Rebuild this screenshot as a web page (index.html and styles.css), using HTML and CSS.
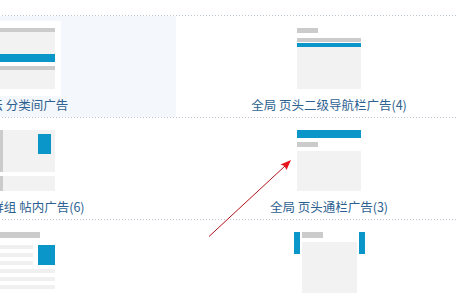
FILE: index.html
```html
<!DOCTYPE html>
<html lang="zh-CN">
<head>
<meta charset="utf-8">
<title>广告位</title>
<link rel="stylesheet" href="styles.css">
</head>
<body>
<div class="board">
  <div class="row">
    <div class="cell active">
      <div class="frame">
        <div class="thumb t-catlist">
          <div class="bar-gray h4"></div>
          <div class="fill h22"></div>
          <div class="bar-blue h8"></div>
          <div class="gap4"></div>
          <div class="bar-gray h4"></div>
          <div class="fill grow"></div>
        </div>
      </div>
      <div class="label">论坛 分类间广告</div>
    </div>
    <div class="cell">
      <div class="frame">
        <div class="thumb t-subnav">
          <div class="bar-gray small h5"></div>
          <div class="gap5"></div>
          <div class="bar-gray h4"></div>
          <div class="gap1"></div>
          <div class="bar-blue h4"></div>
          <div class="fill grow"></div>
        </div>
      </div>
      <div class="label">全局 页头二级导航栏广告(4)</div>
    </div>
  </div>

  <div class="row">
    <div class="cell">
      <div class="frame">
        <div class="thumb t-post">
          <div class="post post-main">
            <div class="side"></div>
            <div class="content"><div class="ad-box"></div></div>
          </div>
          <div class="post post-next">
            <div class="side"></div>
            <div class="content"></div>
          </div>
        </div>
      </div>
      <div class="label">论坛/群组 帖内广告(6)</div>
    </div>
    <div class="cell">
      <div class="frame">
        <div class="thumb t-header">
          <div class="bar-blue h8"></div>
          <div class="gap4"></div>
          <div class="bar-gray small h5"></div>
          <div class="gap4"></div>
          <div class="fill grow"></div>
        </div>
      </div>
      <div class="label">全局 页头通栏广告(3)</div>
    </div>
  </div>

  <div class="row">
    <div class="cell">
      <div class="frame">
        <div class="thumb t-list">
          <div class="bar-gray title"></div>
          <div class="list-grid">
            <div class="line"></div>
            <div class="list-ad"></div>
            <div class="line"></div>
            <div class="line"></div>
            <div class="line wide"></div>
            <div class="line wide"></div>
            <div class="line wide"></div>
          </div>
        </div>
      </div>
      <div class="label">论坛/群组 帖子列表帖位广告(2)</div>
    </div>
    <div class="cell">
      <div class="frame">
        <div class="thumb t-couplet">
          <div class="couplet-bar"></div>
          <div class="couplet-main">
            <div class="bar-gray small h6"></div>
            <div class="gap4"></div>
            <div class="fill grow"></div>
          </div>
          <div class="couplet-bar"></div>
        </div>
      </div>
      <div class="label">全局 对联广告(1)</div>
    </div>
  </div>
</div>

<svg class="arrow" width="458" height="298" viewBox="0 0 458 298" xmlns="http://www.w3.org/2000/svg">
  <line x1="209" y1="236.5" x2="285" y2="166" stroke="#b3121c" stroke-width="1"/>
  <polygon points="291,160 280.5,164.5 284.5,166 286.5,170" fill="#e8141c"/>
</svg>
</body>
</html>
```

FILE: styles.css
```css
html, body {
  margin: 0;
  padding: 0;
  background: #fff;
}

body {
  width: 458px;
  height: 298px;
  overflow: hidden;
  position: relative;
  font-family: "Noto Sans CJK SC", "Microsoft YaHei", "DejaVu Sans", sans-serif;
}

.board {
  margin-left: -130px;
  padding-top: 15px;
  width: 612px;
}

.row {
  display: grid;
  grid-template-columns: 306px 306px;
  height: 101px;
  padding-top: 1px;
  background-image: linear-gradient(to right, #bec8d5 1px, transparent 1px);
  background-size: 3px 1px;
  background-repeat: repeat-x;
  background-position: 0 0;
}

.cell {
  display: flex;
  flex-direction: column;
  align-items: center;
  padding-top: 5px;
}

.cell.active {
  background: #f4f7fb;
}

.frame {
  padding: 7px 6px;
}

.cell.active .frame {
  background: #fff;
}

.label {
  font-size: 12.5px;
  line-height: 16px;
  padding-top: 1px;
  color: #2e5f91;
  white-space: nowrap;
}

.thumb {
  width: 64px;
  height: 61px;
  display: flex;
  flex-direction: column;
}

.bar-gray { background: #cbcbcb; }
.bar-blue { background: #0b96c9; }
.fill { background: #f2f2f2; }
.grow { flex: 1; }
.small { width: 21px; }

.h4 { height: 4px; }
.h5 { height: 5px; }
.h6 { height: 6px; }
.h8 { height: 8px; }
.h22 { height: 22px; }
.gap1 { height: 1px; }
.gap4 { height: 4px; }
.gap5 { height: 5px; }

/* 帖内广告 */
.post {
  display: flex;
}
.post-main { height: 42px; }
.post-next { height: 15px; margin-top: 4px; }
.post .side {
  width: 12px;
  background: #cbcbcb;
}
.post .content {
  flex: 1;
  background: #f2f2f2;
  display: flex;
  justify-content: flex-end;
  align-items: flex-start;
  padding: 4px 4px 0 0;
}
.ad-box {
  width: 13px;
  height: 20px;
  background: #0b96c9;
}

/* 帖子列表帖位广告 */
.t-list .title {
  width: 49px;
  height: 6px;
}
.list-grid {
  margin-top: 7px;
  display: grid;
  grid-template-columns: 42px 17px;
  grid-auto-rows: 4px;
  column-gap: 5px;
  row-gap: 4px;
}
.list-grid .line {
  background: #f0f0f0;
}
.list-grid .line.wide {
  grid-column: 1 / 3;
}
.list-ad {
  grid-column: 2;
  grid-row: 1 / 4;
  background: #0b96c9;
}

/* 对联广告 */
.t-couplet {
  width: 71px;
  flex-direction: row;
  gap: 2px;
}
.couplet-bar {
  width: 6px;
  height: 22px;
  background: #0b96c9;
}
.couplet-main {
  flex: 1;
  display: flex;
  flex-direction: column;
}

.arrow {
  position: absolute;
  left: 0;
  top: 0;
  pointer-events: none;
}
```
